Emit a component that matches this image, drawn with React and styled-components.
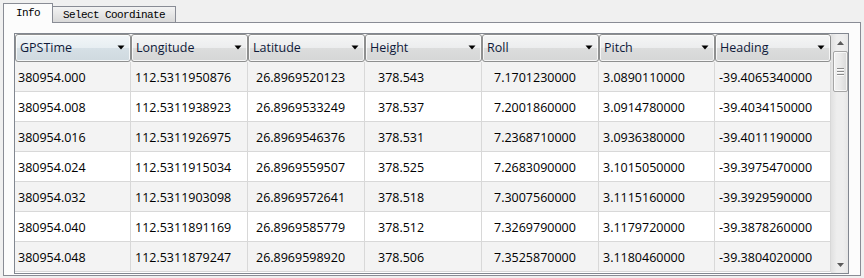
import React from "react";
import styled, { createGlobalStyle } from "styled-components";

const GlobalStyle = createGlobalStyle`
  html, body {
    margin: 0;
    padding: 0;
    background: #f0f0f0;
  }
  body {
    width: 864px;
    height: 278px;
    overflow: hidden;
  }
`;

const columns = [
  { key: "time", title: "GPSTime", width: 116, pad: 3 },
  { key: "lon", title: "Longitude", width: 117, pad: 4 },
  { key: "lat", title: "Latitude", width: 117, pad: 8 },
  { key: "h", title: "Height", width: 117, pad: 13 },
  { key: "roll", title: "Roll", width: 117, pad: 12 },
  { key: "pitch", title: "Pitch", width: 116, pad: 4 },
  { key: "head", title: "Heading", width: 116, pad: 4 },
];

const rows = [
  ["380954.000", "112.5311950876", "26.8969520123", "378.543", "7.1701230000", "3.0890110000", "-39.4065340000"],
  ["380954.008", "112.5311938923", "26.8969533249", "378.537", "7.2001860000", "3.0914780000", "-39.4034150000"],
  ["380954.016", "112.5311926975", "26.8969546376", "378.531", "7.2368710000", "3.0936380000", "-39.4011190000"],
  ["380954.024", "112.5311915034", "26.8969559507", "378.525", "7.2683090000", "3.1015050000", "-39.3975470000"],
  ["380954.032", "112.5311903098", "26.8969572641", "378.518", "7.3007560000", "3.1115160000", "-39.3929590000"],
  ["380954.040", "112.5311891169", "26.8969585779", "378.512", "7.3269790000", "3.1179720000", "-39.3878260000"],
  ["380954.048", "112.5311879247", "26.8969598920", "378.506", "7.3525870000", "3.1180460000", "-39.3804020000"],
];

const gridTemplate = columns.map((c) => `${c.width}px`).join(" ");

const Page = styled.div`
  padding: 3px 3px 0 3px;
`;

const TabStrip = styled.div`
  display: flex;
  align-items: flex-end;
  height: 19px;
  font-family: "Liberation Mono", "DejaVu Sans Mono", monospace;
  font-size: 11px;
  letter-spacing: -0.6px;
  color: #000;
`;

const Tab = styled.div`
  box-sizing: border-box;
  display: flex;
  align-items: center;
  flex: none;
  white-space: nowrap;
  position: relative;
  z-index: ${(p) => (p.active ? 2 : 1)};
  height: ${(p) => (p.active ? "20px" : "16px")};
  margin-bottom: ${(p) => (p.active ? "-1px" : "0")};
  padding: ${(p) => (p.active ? "0 0 1px 12px" : "1px 0 0 10px")};
  border: 1px solid #898c95;
  border-bottom: none;
  border-left: ${(p) => (p.active ? "1px solid #898c95" : "0")};
  background: ${(p) =>
    p.active ? "#fcfcfc" : "linear-gradient(#f3f3f3, #e6e6e6 50%, #d9d9d9)"};
  width: ${(p) => p.width}px;
`;

const Pane = styled.div`
  box-sizing: border-box;
  height: 254px;
  border: 1px solid #898c95;
  background: #fcfcfc;
  padding: 10px 11px 0 10px;
`;

const Grid = styled.div`
  box-sizing: border-box;
  display: flex;
  width: 835px;
  height: 241px;
  border: 1px solid #828790;
  background: #fff;
  overflow: hidden;
`;

const Table = styled.div`
  display: flex;
  flex-direction: column;
  width: 816px;
  font-family: "Open Sans", "Liberation Sans", sans-serif;
  font-size: 12.5px;
  color: #000;
`;

const HeaderRow = styled.div`
  display: grid;
  grid-template-columns: ${gridTemplate};
  height: 28px;
  background: #f4f4f4;
`;

const HeaderCell = styled.div`
  box-sizing: border-box;
  display: flex;
  align-items: center;
  justify-content: space-between;
  padding: 0 4px 1px 4px;
  border: 1px solid #8e8f8f;
  border-radius: 3px;
  box-shadow: inset 0 0 0 1px rgba(255, 255, 255, 0.75);
  background: ${(p) =>
    p.sorted
      ? "linear-gradient(#f2f6f8 0%, #e7eef2 50%, #d6e0e6 51%, #cfd9df 100%)"
      : "linear-gradient(#f5f6f6 0%, #ecedee 50%, #dcdddd 51%, #d5d6d6 100%)"};
  color: #0f1a3a;
`;

const Arrow = styled.svg`
  width: 8px;
  height: 5px;
  flex: none;
  margin-right: 1px;
`;

const Row = styled.div`
  display: grid;
  grid-template-columns: ${gridTemplate};
  height: 30px;
  background: ${(p) => (p.odd ? "#f3f3f3" : "#ffffff")};
`;

const Cell = styled.div`
  box-sizing: border-box;
  display: flex;
  align-items: center;
  padding-left: ${(p) => p.pad}px;
  padding-top: 1px;
  border-right: 1px solid #d8d8d8;
  border-bottom: 1px solid #d8d8d8;
  white-space: nowrap;
`;

const Scrollbar = styled.div`
  display: flex;
  flex-direction: column;
  align-items: center;
  width: 17px;
  background: linear-gradient(90deg, #e3e3e3, #eeeeee 30%, #eeeeee 70%, #e6e6e6);
  border-left: 1px solid #e2e2e2;
`;

const ScrollButton = styled.div`
  display: flex;
  align-items: center;
  justify-content: center;
  width: 100%;
  height: 17px;
`;

const Thumb = styled.div`
  box-sizing: border-box;
  display: flex;
  flex-direction: column;
  align-items: center;
  justify-content: center;
  gap: 1px;
  width: 15px;
  height: 41px;
  border: 1px solid #a5a5a5;
  border-radius: 2px;
  background: linear-gradient(90deg, #f1f1f1, #e9e9e9 50%, #d9d9d9);
  box-shadow: inset 0 0 0 1px rgba(255, 255, 255, 0.7);
`;

const Grip = styled.div`
  width: 7px;
  height: 1px;
  background: #8b8b8b;
  box-shadow: 0 1px 0 #fdfdfd;
  margin-bottom: 1px;
`;

const Spacer = styled.div`
  flex: 1;
`;

const DownArrow = ({ color = "#000" }) => (
  <Arrow viewBox="0 0 8 5">
    <polygon points="0.5,0.5 7.5,0.5 4,4.5" fill={color} />
  </Arrow>
);

const SmallArrow = ({ up }) => (
  <svg width="7" height="4" viewBox="0 0 7 4">
    {up ? (
      <polygon points="0,4 7,4 3.5,0" fill="#5a5a5a" />
    ) : (
      <polygon points="0,0 7,0 3.5,4" fill="#5a5a5a" />
    )}
  </svg>
);

const App = () => (
  <Page>
    <GlobalStyle />
    <TabStrip>
      <Tab active width={50}>Info</Tab>
      <Tab width={123}>Select Coordinate</Tab>
    </TabStrip>
    <Pane>
      <Grid>
        <Table>
          <HeaderRow>
            {columns.map((c, i) => (
              <HeaderCell key={c.key} sorted={i === 0}>
                <span>{c.title}</span>
                <DownArrow />
              </HeaderCell>
            ))}
          </HeaderRow>
          {rows.map((r, i) => (
            <Row key={r[0]} odd={i % 2 === 0}>
              {r.map((v, j) => (
                <Cell key={columns[j].key} pad={columns[j].pad}>
                  {v}
                </Cell>
              ))}
            </Row>
          ))}
        </Table>
        <Scrollbar>
          <ScrollButton>
            <SmallArrow up />
          </ScrollButton>
          <Thumb>
            <Grip />
            <Grip />
            <Grip />
          </Thumb>
          <Spacer />
          <ScrollButton>
            <SmallArrow />
          </ScrollButton>
        </Scrollbar>
      </Grid>
    </Pane>
  </Page>
);

export default App;
